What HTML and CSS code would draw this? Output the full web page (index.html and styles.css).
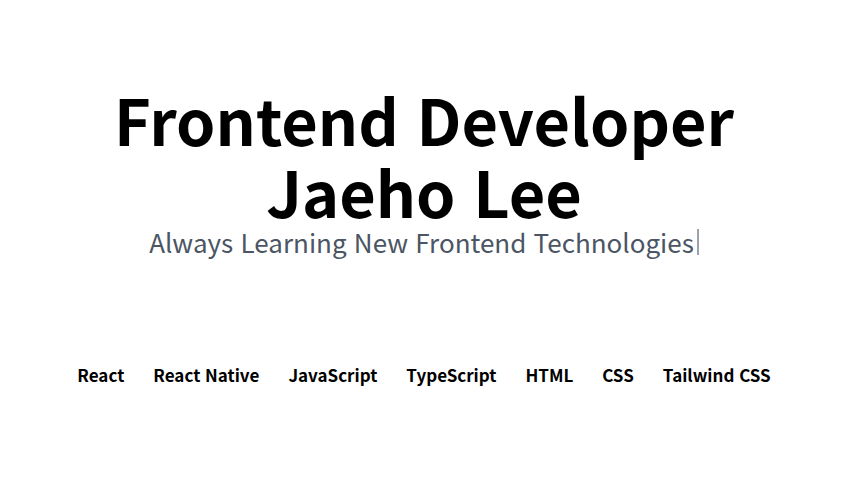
FILE: index.html
```html
<!DOCTYPE html>
<html lang="ko">
<head>
<meta charset="utf-8">
<title>Jaeho Lee</title>
<link rel="stylesheet" href="styles.css">
</head>
<body>
<main class="hero">
  <h1 class="title">Frontend Developer<br>Jaeho Lee</h1>
  <p class="subtitle">Always Learning New Frontend Technologies<span class="caret"></span></p>
  <ul class="skills">
    <li>React</li>
    <li>React Native</li>
    <li>JavaScript</li>
    <li>TypeScript</li>
    <li>HTML</li>
    <li>CSS</li>
    <li>Tailwind CSS</li>
  </ul>
</main>
</body>
</html>
```
FILE: styles.css
```css
html, body {
  margin: 0;
  padding: 0;
  background: #ffffff;
}
body {
  font-family: "Noto Sans CJK KR", "Noto Sans", sans-serif;
  color: #000;
}
.hero {
  display: flex;
  flex-direction: column;
  align-items: center;
  padding-top: 83px;
}
.title {
  margin: 0;
  font-size: 63px;
  line-height: 72px;
  font-weight: 700;
  text-align: center;
  letter-spacing: 0;
}
.subtitle {
  margin: 0;
  font-size: 26px;
  line-height: 30px;
  color: #4b5563;
  display: flex;
  align-items: center;
}
.caret {
  display: inline-block;
  width: 2px;
  height: 26px;
  background: #9ca3af;
  margin-left: 3px;
}
.skills {
  list-style: none;
  margin: 105px 0 0;
  padding: 0;
  display: flex;
  gap: 29px;
  font-size: 17px;
  font-weight: 700;
}
```
